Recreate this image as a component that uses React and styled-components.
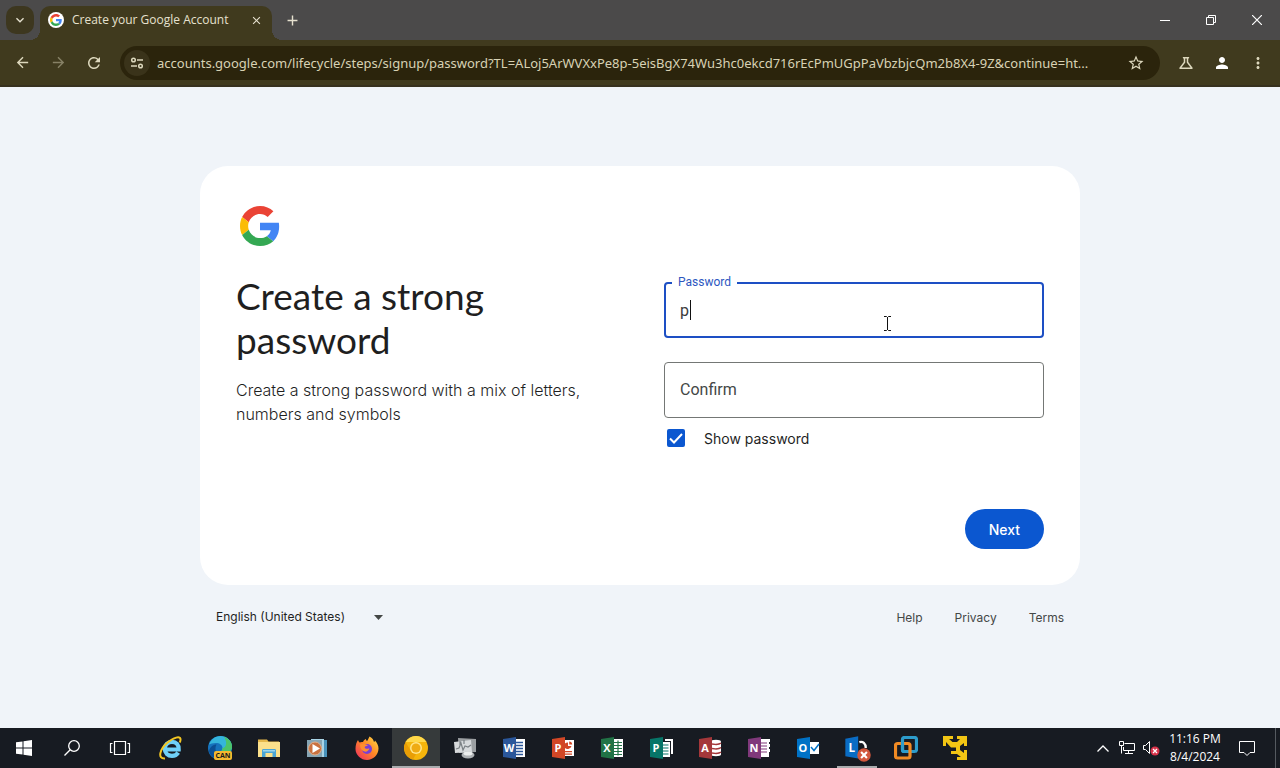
import React, { useState } from "react";
import styled, { createGlobalStyle, css } from "styled-components";
import {
  MdAdd,
  MdArrowBack,
  MdArrowForward,
  MdClose,
  MdExpandMore,
  MdMoreVert,
  MdOutlineScience,
  MdPerson,
  MdRefresh,
  MdStarBorder,
} from "react-icons/md";

const GlobalStyle = createGlobalStyle`
  * {
    box-sizing: border-box;
  }
  body {
    margin: 0;
    font-family: Roboto, "Liberation Sans", sans-serif;
  }
  button, input, select {
    font-family: inherit;
    margin: 0;
  }
`;

const Desktop = styled.div`
  display: flex;
  flex-direction: column;
  min-height: 100vh;
`;

/* browser chrome */

const ghostButton = css`
  display: flex;
  align-items: center;
  justify-content: center;
  flex: none;
  padding: 0;
  border: 0;
  background: none;
  color: inherit;
`;

const TitleBar = styled.header`
  display: flex;
  align-items: center;
  height: 40px;
  padding-left: 6px;
  background: #4b4a4a;
  color: #e6e1cf;
  font-family: "Open Sans", sans-serif;
`;

const TabSearch = styled.button`
  ${ghostButton}
  width: 28px;
  height: 28px;
  border-radius: 10px;
  background: #3d371f;
`;

const Tab = styled.div`
  position: relative;
  display: flex;
  align-items: center;
  align-self: flex-end;
  gap: 8px;
  width: 232px;
  height: 34px;
  margin-left: 6px;
  padding: 0 8px 6px;
  border-radius: 10px 10px 0 0;
  background: #403a1e;
  font-size: 12px;

  &::before,
  &::after {
    content: "";
    position: absolute;
    bottom: 0;
    width: 10px;
    height: 10px;
  }
  &::before {
    left: -10px;
    background: radial-gradient(circle at 0 0, transparent 10px, #403a1e 10px);
  }
  &::after {
    right: -10px;
    background: radial-gradient(circle at 100% 0, transparent 10px, #403a1e 10px);
  }
`;

const Favicon = styled.span`
  display: flex;
  align-items: center;
  justify-content: center;
  width: 16px;
  height: 16px;
  border-radius: 50%;
  background: #fff;
`;

const TabTitle = styled.span`
  flex: 1;
  white-space: nowrap;
  line-height: 16px;
`;

const TabClose = styled.button`
  ${ghostButton}
  width: 16px;
  height: 16px;
`;

const NewTab = styled.button`
  ${ghostButton}
  width: 28px;
  height: 28px;
  margin-left: 6px;
`;

const WindowControls = styled.div`
  display: flex;
  margin-left: auto;
  color: #fff;
`;

const WindowButton = styled.button`
  ${ghostButton}
  width: 46px;
  height: 40px;
`;

const Toolbar = styled.nav`
  display: flex;
  align-items: center;
  height: 47px;
  padding: 0 4px;
  border-bottom: 2px solid #37311f;
  background: #403a1e;
  color: #ddd8bd;
`;

const ToolButton = styled.button`
  ${ghostButton}
  width: 36px;
  height: 34px;
  opacity: ${props => (props.$dim ? 0.45 : 1)};
`;

const Omnibox = styled.div`
  display: flex;
  align-items: center;
  flex: 1;
  min-width: 0;
  height: 34px;
  margin: 0 8px;
  padding: 0 6px 0 4px;
  border-radius: 17px;
  background: #2b240c;
`;

const SiteInfo = styled.button`
  ${ghostButton}
  width: 26px;
  height: 26px;
  border-radius: 50%;
  background: #3a331a;
`;

const UrlInput = styled.input`
  flex: 1;
  min-width: 0;
  margin-left: 7px;
  padding: 0;
  border: 0;
  outline: 0;
  background: none;
  color: #d8d2b4;
  font-family: "Noto Sans", sans-serif;
  font-size: 13px;
  line-height: 20px;
`;

/* sign up page */

const Page = styled.main`
  display: flex;
  flex: 1;
  flex-direction: column;
  align-items: center;
  justify-content: center;
  background: #f0f4f9;
`;

const Column = styled.div`
  width: 100%;
  max-width: 880px;
`;

const Card = styled.section`
  padding: 36px;
  border-radius: 28px;
  background: #fff;
`;

const Logo = styled.div`
  display: flex;
  align-items: center;
  justify-content: center;
  width: 48px;
  height: 48px;
`;

const Split = styled.div`
  display: grid;
  grid-template-columns: 1fr 1fr;
  column-gap: 48px;
  padding-top: 24px;
`;

const Heading = styled.h1`
  margin: 0;
  color: #1f1f1f;
  font-family: Lato, sans-serif;
  font-size: 37px;
  font-weight: 400;
  line-height: 44px;
`;

const Subtitle = styled.p`
  margin: 16px 0 0;
  color: #1f1f1f;
  font-family: Inter, sans-serif;
  font-size: 16px;
  font-weight: 300;
  line-height: 24px;
`;

const Form = styled.form`
  display: flex;
  flex-direction: column;
  padding-top: 8px;
`;

const Field = styled.div`
  position: relative;
  margin-bottom: ${props => (props.$last ? 0 : 24)}px;
`;

const TextInput = styled.input`
  display: block;
  width: 100%;
  height: 56px;
  padding: 0 ${props => (props.$active ? 14 : 15)}px;
  border: ${props => (props.$active ? "2px solid #1d4fc4" : "1px solid #747775")};
  border-radius: 4px;
  outline: 0;
  background: none;
  color: #3c3c3c;
  font-size: 16px;
`;

const FloatingLabel = styled.label`
  position: absolute;
  top: -8px;
  left: 8px;
  padding: 0 6px;
  background: #fff;
  color: #2d57bf;
  font-size: 12px;
  line-height: 16px;
`;

// sits inside the empty box and goes away once something is typed
const RestingLabel = styled.label`
  position: absolute;
  top: 16px;
  left: 16px;
  color: #444746;
  font-size: 16px;
  line-height: 24px;
  pointer-events: none;

  input:not(:placeholder-shown) + & {
    display: none;
  }
`;

const Caret = styled.span`
  position: absolute;
  top: 18px;
  left: 26px;
  width: 1px;
  height: 20px;
  background: #111;
`;

const Pointer = styled.svg`
  position: absolute;
  top: 33px;
  left: 219px;
  pointer-events: none;
`;

const CheckRow = styled.label`
  display: flex;
  align-items: center;
  gap: 16px;
  height: 40px;
  color: #1f1f1f;
  font-family: Inter, sans-serif;
  font-size: 14px;
`;

const CheckBox = styled.span`
  display: grid;
  place-items: center;
  width: 24px;
  height: 24px;

  > * {
    grid-area: 1 / 1;
  }
  svg {
    pointer-events: none;
    visibility: ${props => (props.$checked ? "visible" : "hidden")};
  }
`;

const CheckInput = styled.input`
  appearance: none;
  width: 18px;
  height: 18px;
  border: 2px solid #0b57d0;
  border-radius: 2px;
  background: #fff;

  &:checked {
    background: #0b57d0;
  }
`;

const NextButton = styled.button`
  align-self: flex-end;
  height: 40px;
  margin-top: 51px;
  padding: 0 24px;
  border: 0;
  border-radius: 20px;
  background: #0b57d0;
  color: #fff;
  font-family: Inter, sans-serif;
  font-size: 14px;
  font-weight: 500;
`;

const Footer = styled.footer`
  display: flex;
  align-items: center;
  justify-content: space-between;
  height: 64px;
  padding: 0 16px;
  font-family: Inter, sans-serif;
  font-size: 12px;
`;

const Language = styled.div`
  display: flex;
  align-items: center;
  width: 172px;

  svg {
    flex: none;
    margin-left: -14px;
    pointer-events: none;
  }
`;

const LanguageSelect = styled.select`
  appearance: none;
  width: 100%;
  padding: 0;
  border: 0;
  background: none;
  color: #1f1f1f;
  font-size: 12px;
  line-height: 16px;
`;

const FooterLinks = styled.div`
  display: flex;
  gap: 32px;
`;

const FooterLink = styled.a`
  color: #444746;
  text-decoration: none;
`;

/* windows taskbar */

const Taskbar = styled.footer`
  display: flex;
  height: 40px;
  background: #171b22;
  color: #fff;
`;

const TaskButton = styled.button`
  ${ghostButton}
  width: ${props => props.$width || 48}px;
  height: 40px;
`;

const AppList = styled.div`
  display: flex;
  gap: 1px;
  margin-left: 3px;
`;

const AppButton = styled(TaskButton)`
  background: ${props => (props.$active ? "#363a3b" : "none")};
  ${props =>
    props.$active &&
    css`
      box-shadow: inset 0 -2px #a9acae;
    `}
  ${props =>
    props.$running &&
    css`
      background: linear-gradient(#a9acae, #a9acae) center bottom / 40px 2px no-repeat;
    `}
`;

const Tray = styled.div`
  display: flex;
  margin-left: auto;
`;

const Clock = styled.time`
  display: flex;
  flex-direction: column;
  justify-content: center;
  width: 64px;
  font-family: "Open Sans", sans-serif;
  font-size: 12px;
  line-height: 18px;
  text-align: center;
  white-space: nowrap;
`;

const ShowDesktop = styled.button`
  ${ghostButton}
  width: 5px;
  height: 40px;
  margin-left: 8px;
  border-left: 1px solid #555a60;
`;

const GoogleG = ({ size }) => (
  <svg width={size} height={size} viewBox="0 0 48 48" aria-hidden="true">
    <path fill="#EA4335" d="M24 9.5c3.54 0 6.71 1.22 9.21 3.6l6.85-6.85C35.9 2.38 30.47 0 24 0 14.62 0 6.51 5.38 2.56 13.22l7.98 6.19C12.43 13.72 17.74 9.5 24 9.5z" />
    <path fill="#4285F4" d="M46.98 24.55c0-1.57-.15-3.09-.38-4.55H24v9.02h12.94c-.58 2.96-2.26 5.48-4.78 7.18l7.73 6c4.51-4.18 7.09-10.36 7.09-17.65z" />
    <path fill="#FBBC05" d="M10.53 28.59c-.48-1.45-.76-2.99-.76-4.59s.27-3.14.76-4.59l-7.98-6.19C.92 16.46 0 20.12 0 24c0 3.88.92 7.54 2.56 10.78l7.97-6.19z" />
    <path fill="#34A853" d="M24 48c6.48 0 11.93-2.13 15.89-5.81l-7.73-6c-2.15 1.45-4.92 2.3-8.16 2.3-6.26 0-11.57-4.22-13.47-9.91l-7.98 6.19C6.51 42.62 14.62 48 24 48z" />
  </svg>
);

const Drawing = ({ children, size = 24 }) => (
  <svg width={size} height={size} viewBox="0 0 24 24" fill="none" aria-hidden="true">
    {children}
  </svg>
);

// book cover with a letter, each app brings its own page drawing
const OfficeIcon = ({ color, letter, children }) => (
  <Drawing>
    {children}
    <path fill={color} d="M1 3l13-2v22L1 21z" />
    <text x="7" y="16" fill="#fff" fontFamily="Open Sans, sans-serif" fontSize="11" fontWeight="700" textAnchor="middle">
      {letter}
    </text>
  </Drawing>
);

const TaskViewIcon = () => (
  <Drawing>
    <path stroke="#fff" strokeWidth="1.2" d="M6.5 5.5h11v13h-11zM4.500 7.500h-2v9h2M19.500 7.500h2v9h-2" />
  </Drawing>
);

const apps = [
  {
    name: "Internet Explorer",
    icon: (
      <Drawing>
        <path stroke="#6fd0f7" strokeWidth="4.200" d="M5.500 13.500h14.200c.3-4.700-2.500-7.700-6.700-7.700-4 0-7.200 3-7.200 7 0 4.200 3 7 7.200 7 2.800 0 4.800-1 6.200-3.200" />
        <path stroke="#f3c622" strokeWidth="2" d="M6 22.500C-2 23 1 13 8 7S21 0 21.500 3c.1 1.300-.1 2.200-.8 3.500" />
      </Drawing>
    ),
  },
  {
    name: "Microsoft Edge Canary",
    icon: (
      <Drawing>
        <circle cx="12" cy="12" r="12" fill="#1673bd" />
        <path fill="#35b5dc" d="M1 8.500C3 3.500 7 0 12.500 0 19 0 24 5 24 10.500c0 4-3 6.500-6.500 6.500-2.500 0-4-.8-4-1.800 0-.8 1-1.200 1-3.200 0-3-3-5-6.500-5S2.500 8 1 8.500z" />
        <path fill="#4cc46a" d="M16 .8c5 1.700 8 5.500 8 9.700 0 4-3 6.500-6.500 6.500-2.500 0-4-.8-4-1.800 0-.8 1-1.200 1-3.200 4 0 5-6 1.500-11.200z" />
        <path fill="#0b4f94" d="M1 15c1-4 4-6.500 7.500-6.500C6 13 8 19 14 21.500 8 24 2 21 1 15z" />
        <rect x="6" y="15" width="18" height="9" rx="2" fill="#f5b92e" />
        <text x="15" y="22" fill="#1b1b1b" fontFamily="Open Sans, sans-serif" fontSize="7" fontWeight="700" textAnchor="middle">CAN</text>
      </Drawing>
    ),
  },
  {
    name: "File Explorer",
    icon: (
      <Drawing>
        <path fill="#e5b84b" d="M1 3.500h9l1.500 2H22V20H1z" />
        <path fill="#fbe08b" d="M1 6h22v15H1z" />
        <path fill="#4aa5d5" d="M5 14.500c0-1 .5-1.500 1.500-1.500h11c1 0 1.500.5 1.500 1.500V21h-3.500v-4h-7v4H5z" />
        <path fill="#9bd6ee" d="M6 14h12v1.500H6z" />
      </Drawing>
    ),
  },
  {
    name: "Media Player",
    icon: (
      <Drawing>
        <path fill="#4992bb" d="M9 4h12v17H9z" />
        <path fill="#a9d4e6" d="M5 3h13v18H5z" />
        <path fill="#86a5b4" d="M1 4h15v17H1z" />
        <circle cx="9" cy="12.500" r="6.500" fill="#c9713f" stroke="#e0b08d" />
        <path fill="#fff" d="M6.500 8l7.500 4.500L6.500 17z" />
      </Drawing>
    ),
  },
  {
    name: "Firefox",
    icon: (
      <Drawing>
        <defs>
          <linearGradient id="fox" x1="1" y1="0" x2="0" y2="1">
            <stop offset="0" stopColor="#ffe14a" />
            <stop offset=".45" stopColor="#ff8a25" />
            <stop offset="1" stopColor="#ee2764" />
          </linearGradient>
        </defs>
        <path fill="url(#fox)" d="M3 4c.3 1 .7 1.600 1.500 2.500C6 5.800 7 5.800 8 6c.5-1.500 1.500-2.500 3-3 0 1 .3 1.500 1 2 1-.8 1.600-2.800 2.500-4.500C17.500 2 18.500 4 19 6c.6-.3.800-.8 1-1.500 2 2 3.500 5 3.500 8C23.500 19 18 24 12 24S.5 19 .5 13C.5 9 1.500 6 3 4z" />
        <circle cx="12" cy="13" r="5" fill="#7a3fd4" />
        <path fill="#ff8f2e" d="M5 8.500c2-1 5-1 8 1l-3 1c-.5 1-.3 1.500.5 2 1.500.6 2.500-.3 4 0-1 2.500-3 3.500-5 3-2.500-.6-4.500-3-4.500-7z" />
      </Drawing>
    ),
  },
  {
    name: "Chrome Canary",
    active: true,
    icon: (
      <Drawing>
        <circle cx="12" cy="12" r="12" fill="#f5b50c" />
        <path fill="#ffd849" d="M1.600 6A12 12 0 0 1 22.400 6H12z" />
        <path fill="#e99e05" d="M1.600 6.200 7 15l5 3-3 5.600A12 12 0 0 1 1.600 6.200z" />
        <circle cx="12" cy="12" r="6" fill="#ffe58a" />
        <circle cx="12" cy="12" r="4.500" fill="#efab13" />
      </Drawing>
    ),
  },
  {
    name: "System Monitor",
    icon: (
      <Drawing>
        <path fill="#9b9fa2" d="M5 2l18 1v13L6 17z" />
        <path fill="#d7dadc" d="M1 6l17-2 1 12-17 1z" />
        <path stroke="#7b8185" strokeWidth="1.200" d="M3 13l3-1 2-5 2 7 2-4 3 1 3-2M7 5v4M11 4v4" />
        <ellipse cx="15" cy="19" rx="6.500" ry="3.500" fill="#aeb2b5" />
        <ellipse cx="15" cy="17.500" rx="4.500" ry="2" fill="#eceeee" />
      </Drawing>
    ),
  },
  {
    name: "Word",
    icon: (
      <OfficeIcon color="#2b579a" letter="W">
        <path fill="#fff" d="M13 3h10v18H13z" />
        <path stroke="#2b579a" strokeWidth="1.500" d="M14 6.500h7M14 9.500h7M14 12.500h7M14 15.500h7M14 18.500h7" />
      </OfficeIcon>
    ),
  },
  {
    name: "PowerPoint",
    icon: (
      <OfficeIcon color="#d24726" letter="P">
        <path fill="#fff" d="M13 4h10v16H13z" />
        <path fill="#d24726" d="M14 7.500a4 4 0 0 1 3-1V10h3.500A4 4 0 0 1 14 12zM14 15h7v1.200h-7zM14 17.500h7v1.200h-7zM18.200 5.500c1.800 0 3 1.200 3 3h-3z" />
      </OfficeIcon>
    ),
  },
  {
    name: "Excel",
    icon: (
      <OfficeIcon color="#217346" letter="X">
        <path fill="#fff" d="M13 3h10v18H13z" />
        <path stroke="#217346" strokeWidth="1.200" d="M14 6.500h8M14 9.500h8M14 12.500h8M14 15.500h8M14 18.500h8M18 4.500v15" />
      </OfficeIcon>
    ),
  },
  {
    name: "Publisher",
    icon: (
      <OfficeIcon color="#077568" letter="P">
        <path fill="#fff" d="M16 3h8v15h-2V5h-6zM13 6h8v15h-8z" />
        <path stroke="#077568" strokeWidth="1.200" d="M14 9h5.500M14 12h5.500M14 15h5.500M14 18h5.500" />
      </OfficeIcon>
    ),
  },
  {
    name: "Access",
    icon: (
      <OfficeIcon color="#a4373a" letter="A">
        <path fill="#fff" d="M13 4.500c5-1.500 10-.5 10 1v13c0 1.500-5 2.500-10 1z" />
        <path stroke="#a4373a" strokeWidth="1.400" d="M14 8c4 .8 8 0 9-1M14 12.500c4 .8 8 0 9-1M14 17c4 .8 8 0 9-1" />
      </OfficeIcon>
    ),
  },
  {
    name: "OneNote",
    icon: (
      <OfficeIcon color="#80397b" letter="N">
        <path fill="#fff" d="M13 3h10v3h-1v2h1v3h-1v2h1v3h-1v5h-9z" />
        <path stroke="#80397b" strokeWidth="1.200" d="M14 7h6M14 10h6M14 13h6M14 16h6" />
      </OfficeIcon>
    ),
  },
  {
    name: "Outlook",
    icon: (
      <OfficeIcon color="#0072c6" letter="O">
        <path fill="#fff" d="M13 6h10v12H13z" />
        <path stroke="#0072c6" strokeWidth="1.500" d="M15 11l3 3.500L23 8" />
      </OfficeIcon>
    ),
  },
  {
    name: "Lync",
    running: true,
    icon: (
      <Drawing size={28}>
        <path stroke="#fff" strokeWidth="2" d="M14 7c3-1 5.500 1 5.500 5" />
        <path fill="#0a6cc4" d="M2 4l11-2v19L2 19z" />
        <text x="7.500" y="15" fill="#fff" fontFamily="Open Sans, sans-serif" fontSize="10" fontWeight="700" textAnchor="middle">L</text>
        <circle cx="18" cy="18" r="5.800" fill="#d2573c" />
        <path stroke="#fff" strokeWidth="1.800" d="M15.500 15.500l5 5m0-5l-5 5" />
      </Drawing>
    ),
  },
  {
    name: "VMware Workstation",
    icon: (
      <Drawing>
        <rect x="8.500" y="1.500" width="14" height="14" rx="2" stroke="#2d9ccb" strokeWidth="3.200" />
        <rect x="1.500" y="7.500" width="14.500" height="14.500" rx="2" stroke="#f18b24" strokeWidth="3.200" />
        <path stroke="#2d9ccb" strokeWidth="3.200" d="M8.500 6v8q0 1.500 1.500 1.500h4" />
      </Drawing>
    ),
  },
  {
    name: "VMware Player",
    icon: (
      <Drawing>
        <path
          fill="#f2c514"
          d="M0 0h10v3H6l3.500 3H14l3-3h-3V0h10v10h-3V7l-4 3v4l4 3v-3h3v10H14v-3h4l-4-3H8v-3h5v-3.500H8L3 6v4H0z"
        />
      </Drawing>
    ),
  },
];

const address =
  "accounts.google.com/lifecycle/steps/signup/password?TL=ALoj5ArWVXxPe8p-5eisBgX74Wu3hc0ekcd716rEcPmUGpPaVbzbjcQm2b8X4-9Z&continue=ht...";

const BrowserChrome = () => (
  <>
    <TitleBar>
      <TabSearch aria-label="Search tabs"><MdExpandMore size={16} /></TabSearch>
      <Tab>
        <Favicon><GoogleG size={12} /></Favicon>
        <TabTitle>Create your Google Account</TabTitle>
        <TabClose aria-label="Close tab"><MdClose size={13} /></TabClose>
      </Tab>
      <NewTab aria-label="New tab"><MdAdd size={17} /></NewTab>
      <WindowControls>
        <WindowButton aria-label="Minimize">
          <svg width="10" height="10"><path stroke="currentColor" d="M0 5.500h10" /></svg>
        </WindowButton>
        <WindowButton aria-label="Restore">
          <svg width="10" height="10" fill="none"><path stroke="currentColor" d="M.5 2.500h7v7h-7zM2.500 2.500v-2h7v7h-2" /></svg>
        </WindowButton>
        <WindowButton aria-label="Close">
          <svg width="10" height="10"><path stroke="currentColor" strokeWidth="1.200" d="M0 0l10 10M10 0L0 10" /></svg>
        </WindowButton>
      </WindowControls>
    </TitleBar>
    <Toolbar>
      <ToolButton aria-label="Back"><MdArrowBack size={17} /></ToolButton>
      <ToolButton aria-label="Forward" $dim><MdArrowForward size={17} /></ToolButton>
      <ToolButton aria-label="Reload"><MdRefresh size={18} /></ToolButton>
      <Omnibox>
        <SiteInfo aria-label="View site information">
          <svg width="14" height="14" viewBox="0 0 14 14" fill="none" stroke="currentColor" strokeWidth="1.500">
            <circle cx="3.500" cy="4" r="1.800" />
            <circle cx="10.500" cy="10" r="1.800" />
            <path d="M7 4h6M1 10h6" />
          </svg>
        </SiteInfo>
        <UrlInput aria-label="Address" defaultValue={address} />
        <ToolButton aria-label="Bookmark this tab"><MdStarBorder size={18} /></ToolButton>
      </Omnibox>
      <ToolButton aria-label="Labs"><MdOutlineScience size={18} /></ToolButton>
      <ToolButton aria-label="Profile"><MdPerson size={18} color="#fff" /></ToolButton>
      <ToolButton aria-label="Menu"><MdMoreVert size={18} /></ToolButton>
    </Toolbar>
  </>
);

const SignUp = () => {
  const [password, setPassword] = useState("p");
  const [visible, setVisible] = useState(true);

  return (
    <Page>
      <Column>
        <Card>
          <Logo><GoogleG size={40} /></Logo>
          <Split>
            <div>
              <Heading>Create a strong password</Heading>
              <Subtitle>Create a strong password with a mix of letters, numbers and symbols</Subtitle>
            </div>
            <Form onSubmit={e => e.preventDefault()}>
              <Field>
                <TextInput
                  id="password"
                  type={visible ? "text" : "password"}
                  value={password}
                  onChange={e => setPassword(e.target.value)}
                  $active
                />
                <FloatingLabel htmlFor="password">Password</FloatingLabel>
                <Caret />
                <Pointer width="9" height="17" viewBox="0 0 9 17" fill="none" stroke="#111">
                  <path d="M1 1.500h2.500l1 1 1-1H8M4.500 2v13M1 15.500h2.500l1-1 1 1H8" />
                </Pointer>
              </Field>
              <Field $last>
                <TextInput id="confirm" type={visible ? "text" : "password"} placeholder=" " />
                <RestingLabel htmlFor="confirm">Confirm</RestingLabel>
              </Field>
              <CheckRow>
                <CheckBox $checked={visible}>
                  <CheckInput type="checkbox" checked={visible} onChange={e => setVisible(e.target.checked)} />
                  <svg width="18" height="18" viewBox="0 0 18 18" fill="none">
                    <path stroke="#fff" strokeWidth="2" d="M3 9.500l4 4 8-8.500" />
                  </svg>
                </CheckBox>
                Show password
              </CheckRow>
              <NextButton type="submit">Next</NextButton>
            </Form>
          </Split>
        </Card>
        <Footer>
          <Language>
            <LanguageSelect aria-label="Language">
              <option>English (United States)</option>
            </LanguageSelect>
            <svg width="9" height="5"><path fill="#444746" d="M0 0h9L4.500 5z" /></svg>
          </Language>
          <FooterLinks>
            <FooterLink href="#help">Help</FooterLink>
            <FooterLink href="#privacy">Privacy</FooterLink>
            <FooterLink href="#terms">Terms</FooterLink>
          </FooterLinks>
        </Footer>
      </Column>
    </Page>
  );
};

const WindowsTaskbar = () => (
  <Taskbar>
    <TaskButton aria-label="Start">
      <svg width="16" height="16" fill="#fff"><path d="M0 2.300l6.500-.9v6.100H0zM7.500 1.200L16 0v7.500H7.500zM0 8.500h6.500v6.100L0 13.700zM7.500 8.500H16V16l-8.500-1.200z" /></svg>
    </TaskButton>
    <TaskButton aria-label="Search">
      <svg width="16" height="16" fill="none" stroke="#fff" strokeWidth="1.300"><circle cx="10" cy="6" r="5.300" /><path d="M6.200 9.800L.5 15.500" /></svg>
    </TaskButton>
    <TaskButton aria-label="Task view"><TaskViewIcon /></TaskButton>
    <AppList>
      {apps.map(app => (
        <AppButton key={app.name} aria-label={app.name} $active={app.active} $running={app.running}>
          {app.icon}
        </AppButton>
      ))}
    </AppList>
    <Tray>
      <TaskButton $width={24} aria-label="Show hidden icons">
        <svg width="12" height="7" fill="none"><path stroke="#fff" strokeWidth="1.300" d="M.5 6.500L6 1l5.500 5.500" /></svg>
      </TaskButton>
      <TaskButton $width={24} aria-label="Network">
        <svg width="16" height="14" fill="none" stroke="#fff"><path d="M5.500 2.500h10v7h-11V6M9.500 9.500v3M6 12.500h8M.5.5h4v4h-4zM2.500 4.500v8" /></svg>
      </TaskButton>
      <TaskButton $width={24} aria-label="Volume">
        <svg width="18" height="16" fill="none">
          <path stroke="#fff" d="M1.500 5.500h2l4-4v12l-4-4h-2z" />
          <circle cx="13" cy="11" r="4.500" fill="#d8324a" />
          <path stroke="#fff" strokeWidth="1.300" d="M11 9l4 4m0-4l-4 4" />
        </svg>
      </TaskButton>
      <Clock dateTime="2024-08-04T23:16">
        <span>11:16 PM</span>
        <span>8/4/2024</span>
      </Clock>
      <TaskButton $width={40} aria-label="Notifications">
        <svg width="16" height="16" fill="none"><path stroke="#fff" d="M.5 1.500h15v11H11l-3 3-3-3H.5z" /></svg>
      </TaskButton>
      <ShowDesktop aria-label="Show desktop" />
    </Tray>
  </Taskbar>
);

const App = () => (
  <Desktop>
    <GlobalStyle />
    <BrowserChrome />
    <SignUp />
    <WindowsTaskbar />
  </Desktop>
);

export default App;
